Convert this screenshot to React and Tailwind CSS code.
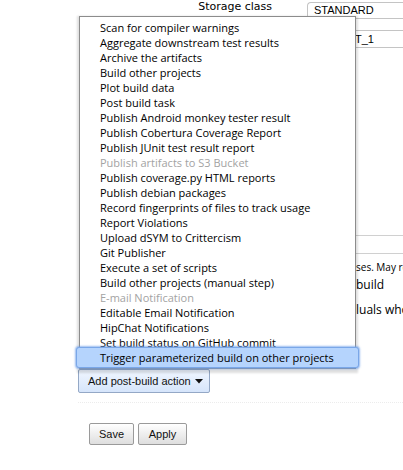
const items = [
  ["Scan for compiler warnings"],
  ["Aggregate downstream test results"],
  ["Archive the artifacts"],
  ["Build other projects"],
  ["Plot build data"],
  ["Post build task"],
  ["Publish Android monkey tester result"],
  ["Publish Cobertura Coverage Report"],
  ["Publish JUnit test result report"],
  ["Publish artifacts to S3 Bucket", "disabled"],
  ["Publish coverage.py HTML reports"],
  ["Publish debian packages"],
  ["Record fingerprints of files to track usage"],
  ["Report Violations"],
  ["Upload dSYM to Crittercism"],
  ["Git Publisher"],
  ["Execute a set of scripts"],
  ["Build other projects (manual step)"],
  ["E-mail Notification", "disabled"],
  ["Editable Email Notification"],
  ["HipChat Notifications"],
  ["Set build status on GitHub commit"],
  ["Trigger parameterized build on other projects", "active"],
];

export default function App() {
  return (
    <div className="relative w-[403px] h-[470px] overflow-hidden bg-white text-black font-['DejaVu_Sans',sans-serif]">
      {/* background form */}
      <div className="flex items-start whitespace-nowrap">
        <div className="w-[272px] text-right text-[11px] leading-[14px]">Storage class</div>
        <div className="ml-[35px] mt-[2px] flex-1 h-[17px] border border-r-0 border-[#c4c4c4] rounded-tl-[4px] pl-[6px] font-['Liberation_Sans',sans-serif] text-[11px] leading-[15px]">
          STANDARD
        </div>
      </div>
      <div className="ml-[307px] mt-[11px] h-[18px] border-y border-l border-[#c4c4c4] pl-[47px] font-['Liberation_Sans',sans-serif] text-[11px] leading-[16px] whitespace-nowrap">
        T_1
      </div>
      <div className="ml-[200px] mt-[187px] h-[19px] border-y border-[#d0d0d0]" />
      <div className="ml-[356px] mt-[7px] font-['Open_Sans',sans-serif] text-[10px] leading-[12px] whitespace-nowrap">ses. May re</div>
      <div className="ml-[356px] mt-[4px] font-['Open_Sans',sans-serif] text-[12px] leading-[16px] whitespace-nowrap">build</div>
      <div className="ml-[356px] mt-[9px] font-['Open_Sans',sans-serif] text-[12px] leading-[16px] whitespace-nowrap">luals who</div>

      {/* Add post-build action */}
      <div className="ml-[78px] mt-[51px] flex">
        <button className="h-[24px] w-[132px] flex items-center pl-[9px] border border-[#94a8c6] rounded-[2px] bg-gradient-to-b from-[#f0f6ff] to-[#d6e5fb] font-['Liberation_Sans',sans-serif] text-[11px] text-[#111]">
          Add post-build action
          <svg width="8" height="5" viewBox="0 0 8 5" className="ml-[4px] mt-[1px]">
            <path d="M0 0 L8 0 L4 4.5 Z" fill="#111" />
          </svg>
        </button>
      </div>
      <div className="ml-[78px] mt-[9px] h-0 border-t border-dotted border-[#ececec]" />

      <div className="ml-[89px] mt-[20px] flex gap-[4px] font-['Liberation_Sans',sans-serif] text-[11px]">
        <button className="w-[45px] h-[22px] border border-[#9a9a9a] rounded-[2px] bg-gradient-to-b from-white to-[#dedede] text-[#111]">Save</button>
        <button className="w-[49px] h-[22px] border border-[#9a9a9a] rounded-[2px] bg-gradient-to-b from-white to-[#dedede] text-[#111]">Apply</button>
      </div>

      {/* popup menu */}
      <div className="absolute left-[79px] top-[16px] w-[277px] border border-[#8c8c8c] bg-white pt-[3px] pb-[3px] shadow-[0_2px_2px_2px_rgba(0,0,0,0.13)] font-['Open_Sans',sans-serif] text-[11px]">
        {items.map(([label, state]) => (
          <div key={label} className="relative h-[15px]">
            {state === "active" && (
              <span className="absolute -left-[4px] -right-[4px] -top-[3px] -bottom-[3px] rounded-[3px] border border-[#7aa7e8] bg-[#b5d4fd] shadow-[0_0_2px_1px_rgba(110,160,235,0.7)]" />
            )}
            <div
              className={
                "relative pl-[20px] leading-[15px] whitespace-nowrap " +
                (state === "disabled" ? "text-[#a3a3a3]" : "text-black")
              }
            >
              {label}
            </div>
          </div>
        ))}
      </div>
    </div>
  );
}
